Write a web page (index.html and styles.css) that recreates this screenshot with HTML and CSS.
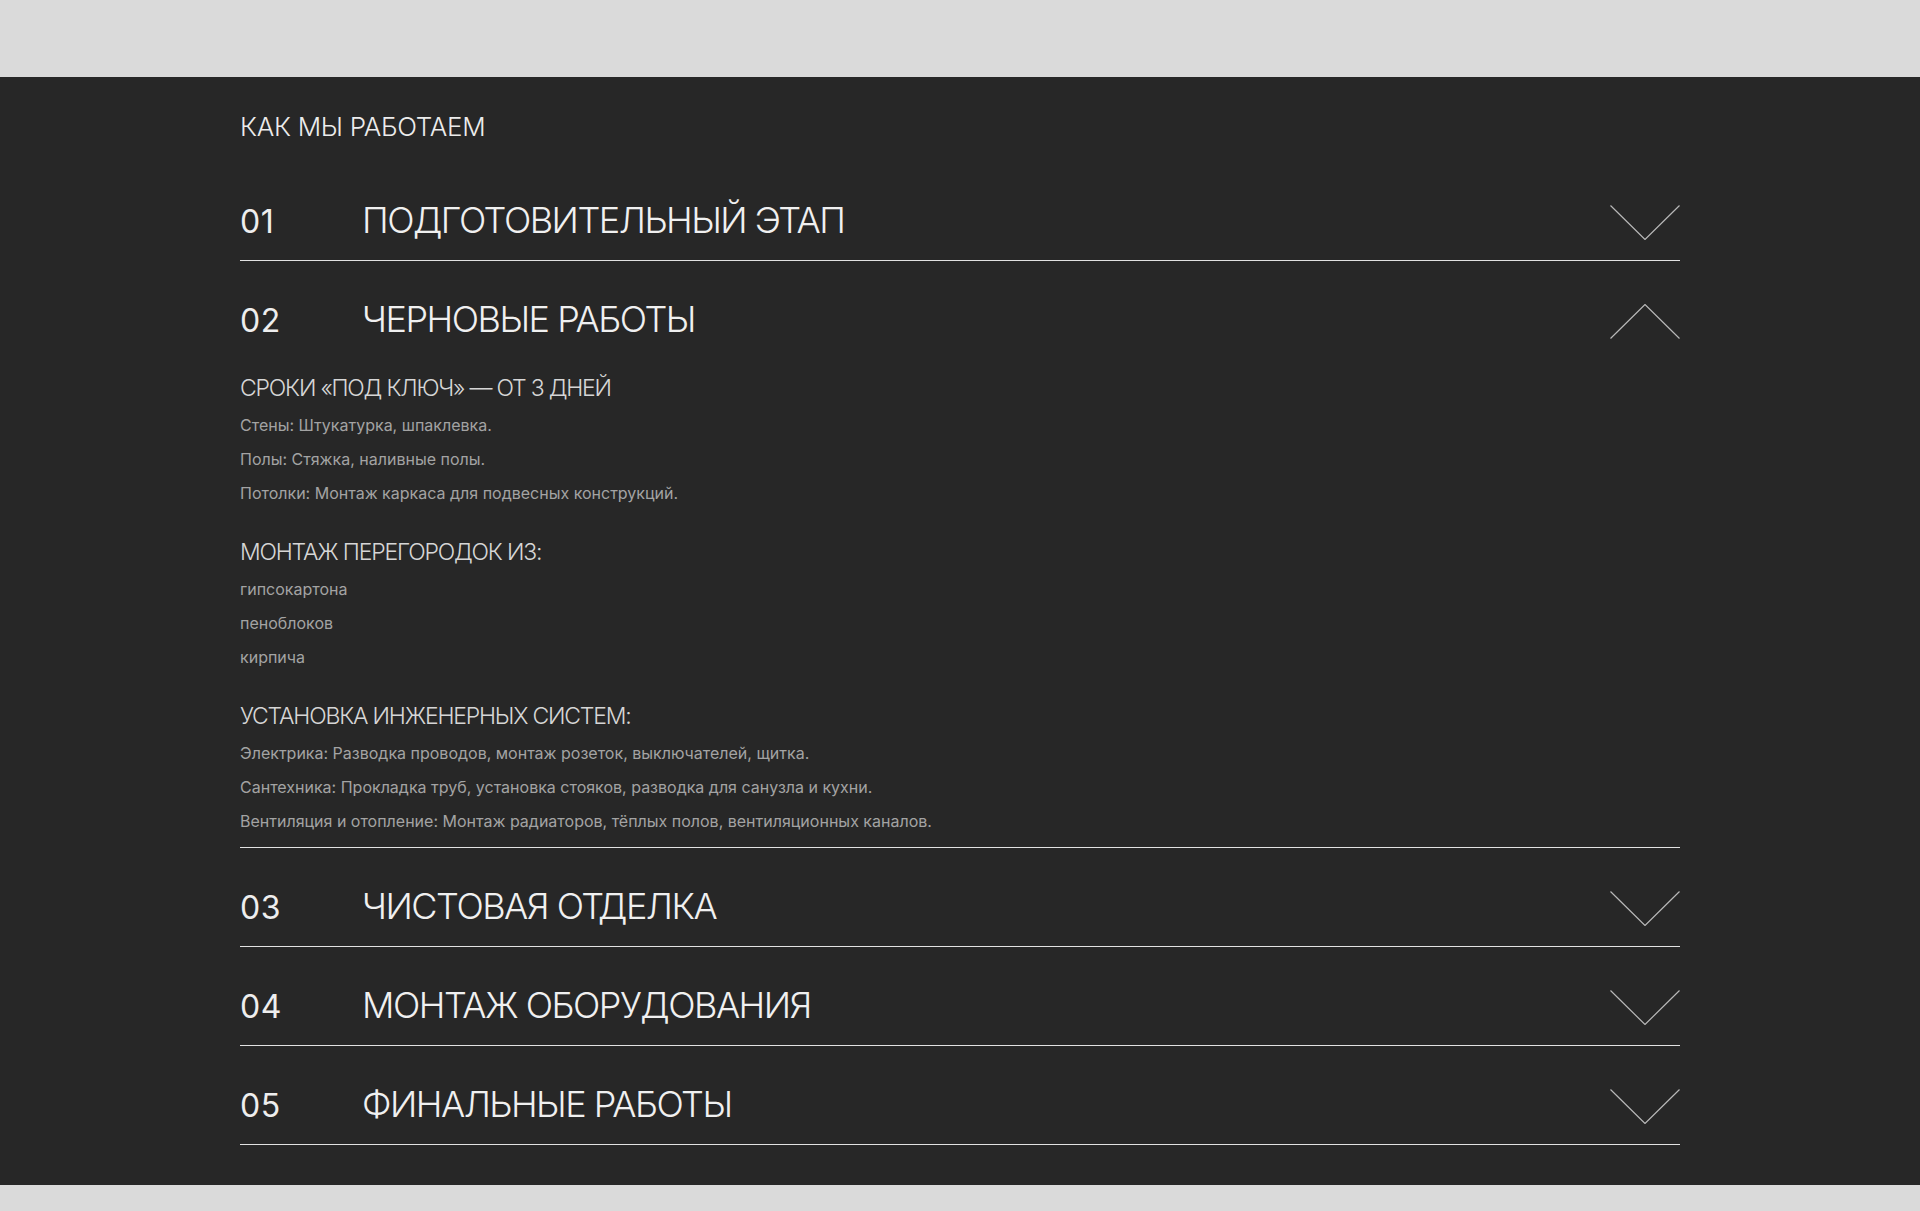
FILE: index.html
```html
<!DOCTYPE html>
<html lang="ru">
<head>
<meta charset="utf-8">
<title>Как мы работаем</title>
<link rel="stylesheet" href="styles.css">
</head>
<body>
<div class="top-bar"></div>
<section class="work">
  <div class="container">
    <h2 class="work-title">КАК МЫ РАБОТАЕМ</h2>
    <div class="steps">
      <div class="step">
        <div class="step-head">
          <div class="step-name"><span class="step-num">01</span><span class="step-title">ПОДГОТОВИТЕЛЬНЫЙ ЭТАП</span></div>
          <svg class="chev" width="70" height="35" viewBox="0 0 70 35"><polyline points="0.5,0.5 35,34.5 69.5,0.5"/></svg>
        </div>
      </div>
      <div class="step open">
        <div class="step-head">
          <div class="step-name"><span class="step-num">02</span><span class="step-title">ЧЕРНОВЫЕ РАБОТЫ</span></div>
          <svg class="chev" width="70" height="35" viewBox="0 0 70 35"><polyline points="0.5,34.5 35,0.5 69.5,34.5"/></svg>
        </div>
        <div class="step-body">
          <div class="group">
            <h3 class="group-title">СРОКИ «ПОД КЛЮЧ» — ОТ 3 ДНЕЙ</h3>
            <p class="item">Стены: Штукатурка, шпаклевка.</p>
            <p class="item">Полы: Стяжка, наливные полы.</p>
            <p class="item">Потолки: Монтаж каркаса для подвесных конструкций.</p>
          </div>
          <div class="group">
            <h3 class="group-title">МОНТАЖ ПЕРЕГОРОДОК ИЗ:</h3>
            <p class="item">гипсокартона</p>
            <p class="item">пеноблоков</p>
            <p class="item">кирпича</p>
          </div>
          <div class="group">
            <h3 class="group-title">УСТАНОВКА ИНЖЕНЕРНЫХ СИСТЕМ:</h3>
            <p class="item">Электрика: Разводка проводов, монтаж розеток, выключателей, щитка.</p>
            <p class="item">Сантехника: Прокладка труб, установка стояков, разводка для санузла и кухни.</p>
            <p class="item">Вентиляция и отопление: Монтаж радиаторов, тёплых полов, вентиляционных каналов.</p>
          </div>
        </div>
      </div>
      <div class="step">
        <div class="step-head">
          <div class="step-name"><span class="step-num">03</span><span class="step-title">ЧИСТОВАЯ ОТДЕЛКА</span></div>
          <svg class="chev" width="70" height="35" viewBox="0 0 70 35"><polyline points="0.5,0.5 35,34.5 69.5,0.5"/></svg>
        </div>
      </div>
      <div class="step">
        <div class="step-head">
          <div class="step-name"><span class="step-num">04</span><span class="step-title">МОНТАЖ ОБОРУДОВАНИЯ</span></div>
          <svg class="chev" width="70" height="35" viewBox="0 0 70 35"><polyline points="0.5,0.5 35,34.5 69.5,0.5"/></svg>
        </div>
      </div>
      <div class="step">
        <div class="step-head">
          <div class="step-name"><span class="step-num">05</span><span class="step-title">ФИНАЛЬНЫЕ РАБОТЫ</span></div>
          <svg class="chev" width="70" height="35" viewBox="0 0 70 35"><polyline points="0.5,0.5 35,34.5 69.5,0.5"/></svg>
        </div>
      </div>
    </div>
  </div>
</section>
<div class="bottom-bar"></div>
</body>
</html>
```

FILE: styles.css
```css
* { box-sizing: border-box; }
html, body {
  margin: 0;
  padding: 0;
  background: #dadada;
  font-family: Inter, "Noto Sans", sans-serif;
}
.top-bar { height: 77px; background: #dadada; }
.bottom-bar { height: 25px; background: #dadada; }
.work {
  background: #272727;
  padding: 34px 0 40px;
}
.container {
  width: 1440px;
  margin: 0 auto;
}
.work-title {
  margin: 0 0 19px;
  font-size: 26px;
  line-height: 32px;
  font-weight: 300;
  color: #ececec;
  letter-spacing: -0.3px;
}
.step {
  border-bottom: 1px solid #e2e2e2;
}
.step-head {
  display: flex;
  align-items: center;
  justify-content: space-between;
  height: 98px;
  padding: 43px 0 21px;
}
.step-name {
  display: flex;
  align-items: baseline;
  margin-top: -4px;
}
.step-num {
  width: 122px;
  font-size: 32px;
  font-weight: 400;
  color: #eeeeee;
  line-height: 36px;
  letter-spacing: 0.5px;
}
.step-title {
  font-size: 36px;
  font-weight: 300;
  color: #f0f0f0;
  line-height: 40px;
  letter-spacing: -1.5px;
}
.chev {
  display: block;
  flex: none;
}
.chev polyline {
  fill: none;
  stroke: #b8b8b8;
  stroke-width: 1.2;
}
.step-body {
  padding: 15px 0 9px;
}
.group + .group { margin-top: 28px; }
.group-title {
  margin: 0 0 6px;
  font-size: 23px;
  line-height: 28px;
  font-weight: 300;
  color: #d6d6d6;
  letter-spacing: -1.2px;
}
.item {
  margin: 0;
  font-size: 16px;
  line-height: 34px;
  font-weight: 400;
  color: #a3a3a3;
}
```
